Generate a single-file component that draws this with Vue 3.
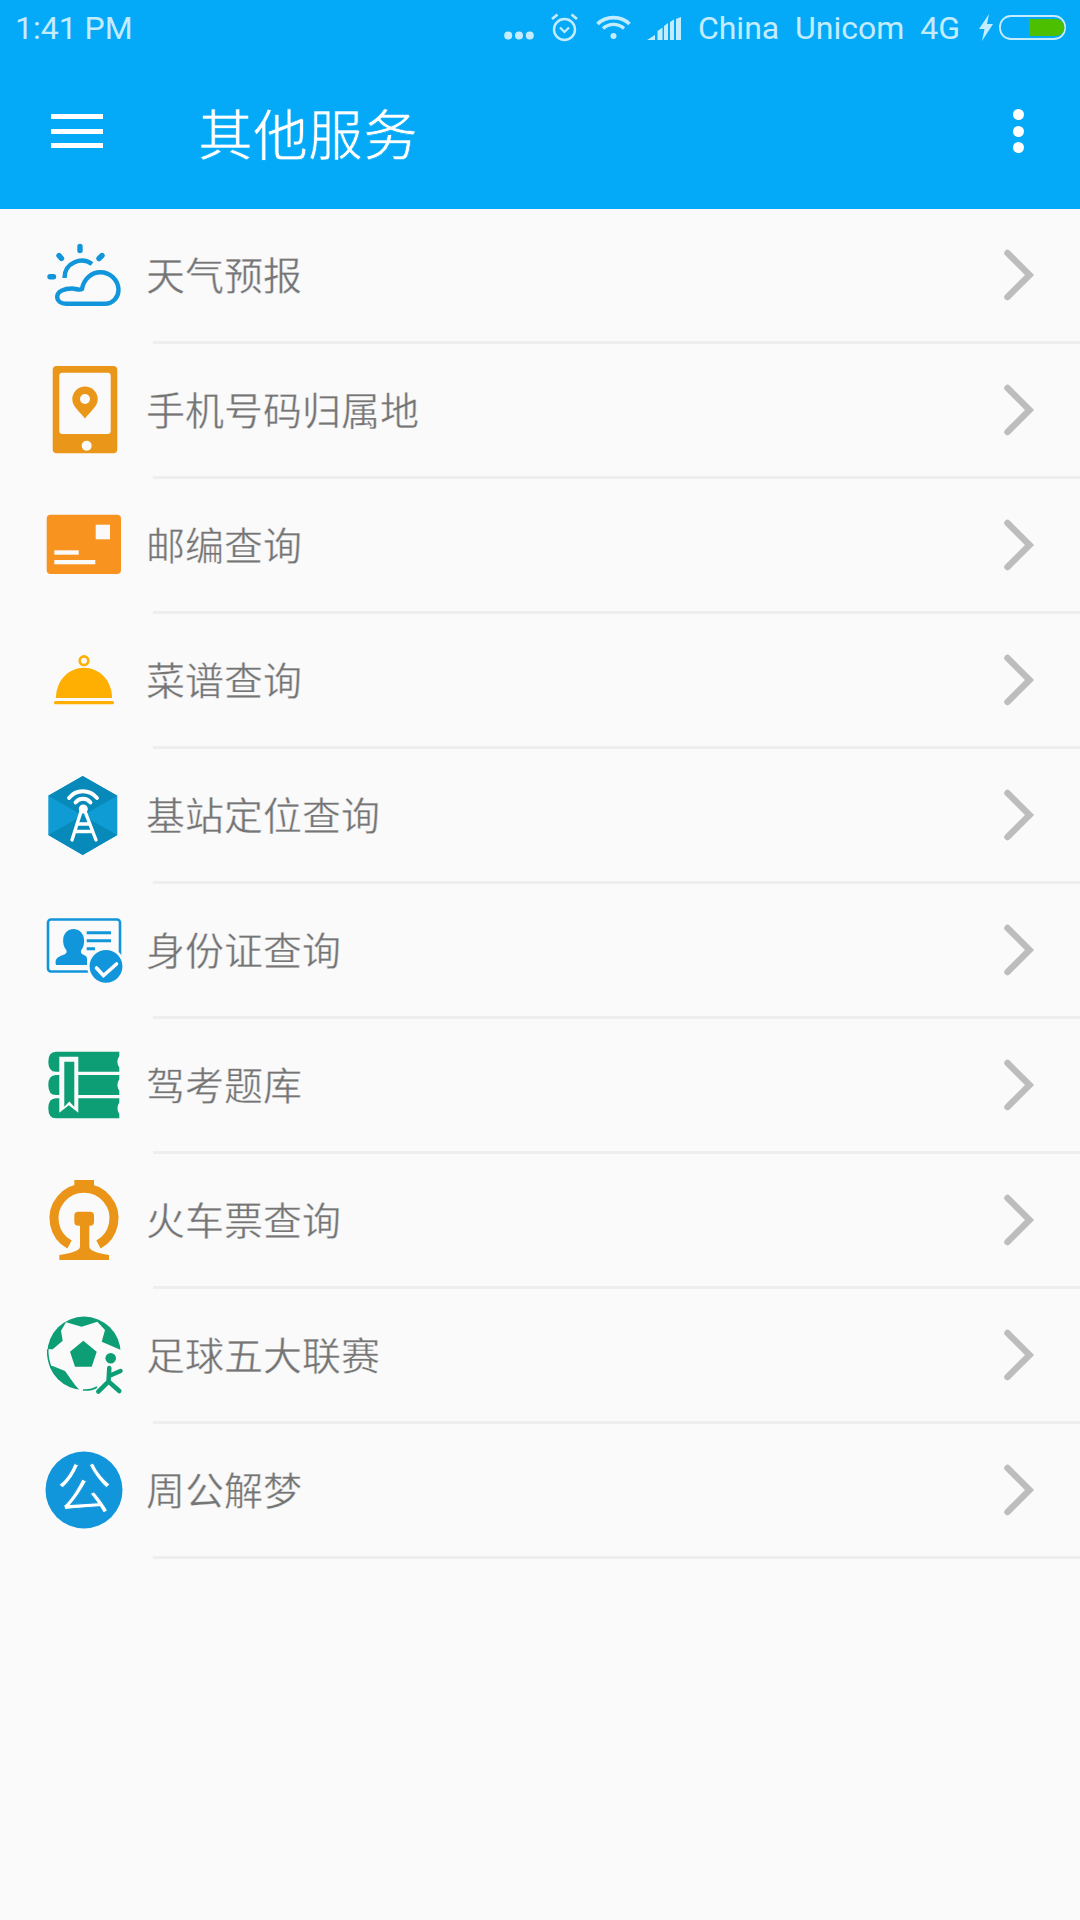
<script setup>
const rows = [
  { id: 'weather', label: '天气预报' },
  { id: 'phone', label: '手机号码归属地' },
  { id: 'post', label: '邮编查询' },
  { id: 'menu', label: '菜谱查询' },
  { id: 'tower', label: '基站定位查询' },
  { id: 'idcard', label: '身份证查询' },
  { id: 'exam', label: '驾考题库' },
  { id: 'train', label: '火车票查询' },
  { id: 'soccer', label: '足球五大联赛' },
  { id: 'dream', label: '周公解梦' }
]
</script>

<template>
  <div class="page">
    <header class="head">
      <div class="status">
        <span class="time">1:41&nbsp; PM</span>
        <div class="status-right">
          <svg class="s-dots" width="30" height="9" viewBox="0 0 30 9">
            <circle cx="4.200" cy="4.500" r="4" /><circle cx="15" cy="4.500" r="4" /><circle cx="25.800" cy="4.500" r="4" />
          </svg>
          <svg class="s-alarm" width="27" height="29" viewBox="0 0 27 29">
            <circle cx="13.500" cy="16.500" r="10.500" fill="none" stroke-width="2.400" />
            <path d="M9 14.500l4.500 4.500 4.500-4.500" fill="none" stroke-width="2.200" />
            <path d="M1 6l5.500-4.500M26 6l-5.500-4.500" fill="none" stroke-width="2.800" />
          </svg>
          <svg class="s-wifi" width="35" height="24" viewBox="0 0 35 24">
            <path d="M1.500 9C10 .5 25 .5 33.500 9" fill="none" stroke-width="3.600" />
            <path d="M7 13.500C13 8 22 8 28 13.500" fill="none" stroke-width="3.400" />
            <circle cx="17.500" cy="21" r="3" />
          </svg>
          <svg class="s-signal" width="34" height="23" viewBox="0 0 34 23">
            <path d="M0 23l8-5v5zM10.500 23v-9l5-3.500V23zM17 23V9l4-3v17zM23 23V5l4-2.500V23zM29 23V2l5-2v23z" />
          </svg>
          <span class="carrier">China&nbsp; Unicom&nbsp; 4G</span>
          <svg class="s-bolt" width="16" height="27" viewBox="0 0 16 27">
            <path d="M11 0L1 15h5.500L4 27 15 10H9z" />
          </svg>
          <svg class="s-batt" width="67" height="25" viewBox="0 0 67 25">
            <rect x="1" y="1" width="65" height="23" rx="11" fill="none" stroke-width="1.800" />
            <path class="s-batt-fill" d="M30 4h27a8.500 8.500 0 0 1 0 17H30z" />
          </svg>
        </div>
      </div>
      <div class="toolbar">
        <div class="burger"><i></i><i></i><i></i></div>
        <h1 class="title">其他服务</h1>
        <div class="more"><i></i><i></i><i></i></div>
      </div>
    </header>

    <ul class="list">
      <li v-for="row in rows" :key="row.id" class="row">
        <svg class="icon" width="80" height="90" viewBox="0 0 80 90">
          <g v-if="row.id === 'weather'" fill="none" stroke="#1296DB" stroke-linecap="round">
            <path d="M35 16.500v4M14 25.500l2.500 3M57 25.500l-3 3M5 46.700h3.500" stroke-width="5.400" />
            <path d="M19.500 48C19.500 32 37 26.500 47 34" stroke-width="4.400" stroke-linecap="butt" />
            <path d="M21 73.800H60C68 73.800 73.500 67 73.500 60 73.500 50 65 42.200 55.500 42.200 46 42.200 38.500 49.500 37 59 34.500 61 31.500 58.500 27 58.500 19 58.500 12.200 61.500 12.200 66.500 12.200 71 16 73.800 21 73.800z" stroke-width="4.400" />
          </g>
          <g v-else-if="row.id === 'phone'">
            <rect x="7.700" y="1" width="64.600" height="87.300" rx="4" fill="#E99619" />
            <rect x="14.300" y="7.700" width="51.400" height="61.300" rx="3" fill="#FAFAFA" />
            <circle cx="41.700" cy="80.700" r="5" fill="#FAFAFA" />
            <path d="M40 53.500C35 47 27.300 41.500 27.300 34.300a12.700 12.700 0 0 1 25.400 0C52.700 41.500 45 47 40 53.500z" fill="#E99619" />
            <circle cx="40" cy="34" r="5" fill="#FAFAFA" />
          </g>
          <g v-else-if="row.id === 'post'">
            <rect x="1.700" y="14.700" width="74.300" height="59.300" rx="4" fill="#F9931F" />
            <rect x="50.700" y="24.700" width="14.300" height="14.600" fill="#FAFAFA" />
            <rect x="9.300" y="50.300" width="24.400" height="4.400" fill="#FAFAFA" />
            <rect x="9.300" y="60" width="41" height="4.300" fill="#FAFAFA" />
          </g>
          <g v-else-if="row.id === 'menu'">
            <circle cx="39" cy="25.700" r="4.300" fill="none" stroke="#FFAF02" stroke-width="2.600" />
            <path d="M11 63C11 45 24 32.700 39 32.700S67 45 67 63z" fill="#FFAF02" />
            <rect x="9" y="66" width="60" height="3.300" rx="1.600" fill="#FFAF02" />
          </g>
          <g v-else-if="row.id === 'tower'">
            <path d="M37.700 6L72.300 25.700V65L37.700 85 3.300 65V25.700z" fill="#0F9BD3" />
            <path d="M37.700 6L72.300 25.700 37.700 45.500 3.300 25.700zM37.700 85L72.300 65 37.700 45.500 3.300 65z" fill="#0789BA" />
            <g fill="none" stroke="#fff" stroke-linecap="round">
              <path d="M24 28C31 19 44.500 19 52 28M30.500 32.500C34.500 27.500 41.500 27.500 45.500 32.500" stroke-width="3.800" />
              <path d="M36.500 40L27 70M39.500 40L51 70M32 54h12M29.500 61.500h17" stroke-width="3.400" />
            </g>
            <circle cx="38.300" cy="39" r="4.500" fill="#fff" />
          </g>
          <g v-else-if="row.id === 'idcard'">
            <rect x="3" y="14.500" width="72" height="52" rx="3" fill="none" stroke="#1296DB" stroke-width="2.600" />
            <path d="M11 60c-1.500-5.500 1-8 7-10 3-1 4-2 3.500-4.500-2.500-3-3.800-7-3.300-11.500.5-6 5-10 10.300-10S38.500 28 39 34c.5 4.500-.5 8.500-3 11.500-.5 2.500.5 3.500 3 4.500 2 .8 3 2 3 4v6z" fill="#1296DB" />
            <path d="M41.700 27.700H66M41.700 35.700H66M41.700 43.700H50" stroke="#1296DB" stroke-width="3" />
            <circle cx="61" cy="61.300" r="19" fill="#FAFAFA" />
            <circle cx="61" cy="61.300" r="16.400" fill="#1296DB" />
            <path d="M51.500 63l7 7.500 13-11.500" fill="none" stroke="#fff" stroke-width="3.600" stroke-linecap="round" />
          </g>
          <g v-else-if="row.id === 'exam'">
            <path d="M11 11.700H74.300V16Q70.500 21.700 74.300 27.400V31.700H11Q3.300 31.700 3.300 21.700T11 11.700z" fill="#0E9E75" />
            <path d="M11 35H74.300V39.300Q70.500 45 74.300 50.700V55H11Q3.300 55 3.300 45T11 35z" fill="#0E9E75" />
            <path d="M11 58.300H74.300V62.600Q70.500 68.300 74.300 74V78.300H11Q3.300 78.300 3.300 68.300T11 58.300z" fill="#0E9E75" />
            <path d="M14.300 16.700H33.300V72.700L23.800 65.200 14.300 72.700z" fill="#FAFAFA" />
            <path d="M19.300 21.700H29.300V66.700L24.300 61.500 19.300 66.700z" fill="#0E9E75" />
          </g>
          <g v-else-if="row.id === 'train'" fill="#EA9518">
            <path d="M24.500 69.500A30 30 0 1 1 53.500 69.500" fill="none" stroke="#EA9518" stroke-width="9" />
            <rect x="29.300" y="5" width="19.700" height="9" />
            <rect x="29.300" y="36.700" width="19.700" height="14" rx="4" />
            <path d="M35 48h9.300v24c1 4 8 6 19.700 8v5H14.300v-5c12-2 19.700-4 20.700-8z" />
          </g>
          <g v-else-if="row.id === 'soccer'">
            <circle cx="39" cy="43.300" r="36.700" fill="#0E9E75" />
            <path d="M21 12.300L36.700 16.700 52.300 11.700 60 20 56.700 31.700 80 41.700V84H38.300L30 75 20 61 7.700 56H0V39.300H7.700L17.700 30.700 16 20.700z" fill="#FAFAFA" />
            <path d="M2.700 39.300C2.300 54 9 66 20 73.500" fill="none" stroke="#0E9E75" stroke-width="1.600" />
            <path d="M38 80C43 80.300 48 79.500 52 77" fill="none" stroke="#0E9E75" stroke-width="1.600" />
            <path d="M38.300 30.700L51.700 41.700 46.700 56.700H30L25 41.700z" fill="#0E9E75" />
            <circle cx="65.700" cy="48.300" r="5.300" fill="#0E9E75" />
            <path d="M64.300 58L63.500 71.500 53.300 81.700M63.500 71.500L74.300 81M64 66L75.500 61" fill="none" stroke="#0E9E75" stroke-width="4.500" stroke-linecap="round" />
          </g>
          <g v-else-if="row.id === 'dream'">
            <circle cx="39" cy="45" r="38.500" fill="#1296DB" />
            <text class="dream-char" x="39" y="64" text-anchor="middle">公</text>
          </g>
        </svg>
        <span class="label">{{ row.label }}</span>
        <svg class="chevron" width="34" height="56" viewBox="0 0 34 56">
          <path d="M5.500 6l22 22-22 22" fill="none" stroke="#BDBDBD" stroke-width="6.500" stroke-linecap="round" />
        </svg>
      </li>
    </ul>
  </div>
</template>

<style>
html, body { margin: 0; background: #FAFAFA; }
</style>

<style scoped>
.page {
  width: 1080px;
  height: 1920px;
  background: #FAFAFA;
  font-family: "Noto Sans CJK SC", "Liberation Sans", sans-serif;
  overflow: hidden;
}
.head {
  height: 209px;
  background: #04AAF8;
}
.status {
  height: 56px;
  display: flex;
  align-items: center;
  justify-content: space-between;
  padding: 0 14px 0 15px;
  color: #C4ECFF;
  font-family: Roboto, "Liberation Sans", sans-serif;
  font-size: 32px;
}
.time { word-spacing: -4px; }
.status-right {
  display: flex;
  align-items: center;
}
.status svg { fill: #C4ECFF; stroke: #C4ECFF; stroke-width: 0; flex: none; }
.s-dots { margin: 15px 17px 0 0; }
.s-alarm { margin: 0 18px 2px 0; }
.s-wifi { margin: 0 16px 2px 0; }
.s-signal { margin: 1px 17px 0 0; }
.carrier { margin-right: 18px; white-space: nowrap; }
.s-bolt { margin: 0 5px 1px 0; }
.s-batt { margin-bottom: 2px; }
.status svg .s-batt-fill { fill: #4CC000; stroke: none; }
.toolbar {
  height: 153px;
  display: flex;
  align-items: center;
  padding: 0 0 3px 51px;
  box-sizing: border-box;
  color: #fff;
}
.burger { width: 52px; flex: none; display: flex; flex-direction: column; gap: 9.500px; }
.burger i { display: block; height: 5px; background: #fff; }
.title {
  margin: 0 0 0 95px;
  font-size: 55px;
  font-weight: 400;
  line-height: 1;
  flex: 1;
  -webkit-text-stroke: 0.7px #04AAF8;
}
.more { margin-right: 56px; display: flex; flex-direction: column; gap: 5.500px; flex: none; }
.more i { display: block; height: 11px; width: 11px; border-radius: 50%; background: #fff; }
.list { list-style: none; margin: 0; padding: 0; }
.row {
  position: relative;
  height: 135px;
  box-sizing: border-box;
  display: flex;
  align-items: center;
  padding: 0 44px 3px 45px;
}
.row::after {
  content: "";
  position: absolute;
  left: 153px;
  right: 0;
  bottom: 0;
  height: 3px;
  background: #EEEEEE;
}
.icon { flex: none; }
.label {
  flex: 1;
  margin: 0 0 4px 21px;
  font-size: 39px;
  color: #757575;
  line-height: 1;
  -webkit-text-stroke: 0.4px #FAFAFA;
}
.chevron { flex: none; }
.dream-char {
  font-size: 56px;
  fill: #fff;
  stroke: #1296DB;
  stroke-width: 1px;
  font-family: "Noto Sans CJK SC", sans-serif;
}
</style>
